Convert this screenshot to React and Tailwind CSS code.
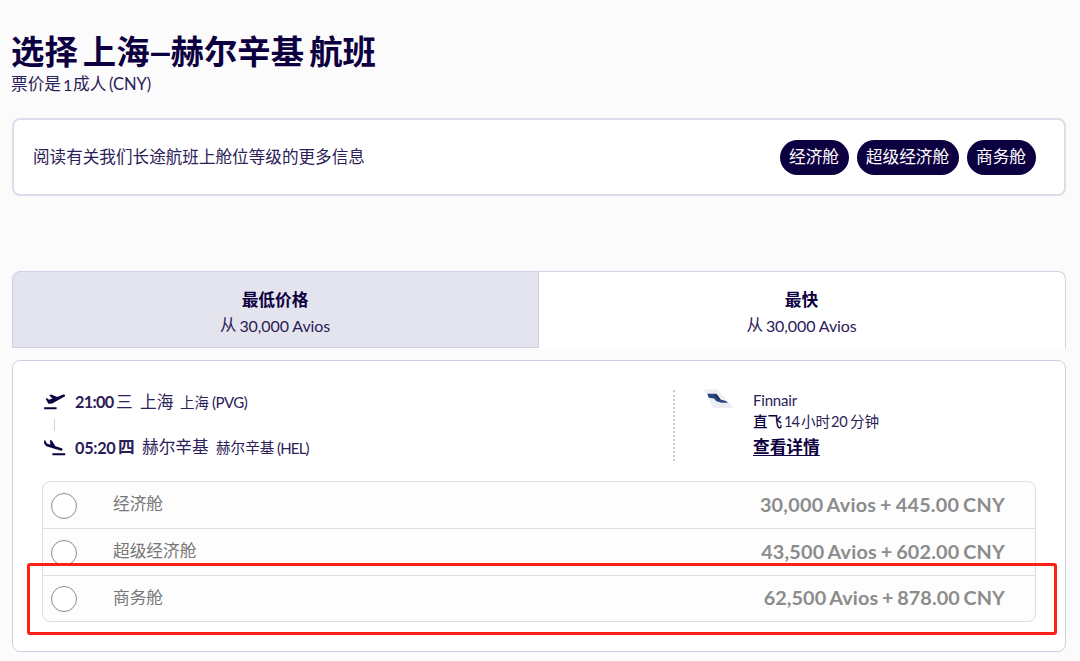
const cabins = [
  { name: '经济舱', price: '30,000 Avios + 445.00 CNY', tracking: 'tracking-[0.25px]' },
  { name: '超级经济舱', price: '43,500 Avios + 602.00 CNY', tracking: 'tracking-[0.2px]' },
  { name: '商务舱', price: '62,500 Avios + 878.00 CNY', tracking: 'tracking-[0.1px]' },
];

function Takeoff() {
  return (
    <svg viewBox="0 0 22 17" className="h-[17px] w-[22px] shrink-0" fill="#0d0040">
      <path d="M.2 13.2h12.4v2.1H.2zM1.6 4.6l1.4-.4 2 1.6 3.4-1.2L5.2 1.2l1.9-.8 6.1 2.7L18.6.7c1-.5 2.1-.4 2.4.3.4.8-.3 1.6-1.3 2.1L8.2 9.4l-3.8.3z" />
    </svg>
  );
}

function Landing() {
  return (
    <svg viewBox="0 0 22 17" className="h-[17px] w-[22px] shrink-0" fill="#0d0040">
      <path d="M8.4 13.2h12.8v2.1H8.4zM.1.3l1.4.5 1.3 2.8 3.5 1.1L6 0l1.8.6 3.6 5.7L17 8c1.1.4 1.7 1.2 1.5 1.9-.3.7-1.1.9-2.1.6L2.3 6.2.1 3.6z" />
    </svg>
  );
}

function TailLogo() {
  return (
    <svg viewBox="0 0 32 20" className="h-5 w-8 shrink-0">
      <path d="M0 .5h13.5L29.5 19H9.5z" fill="#ededf3" />
      <path d="M3.5 4.8h8.7l3.4 4.6 1.7 1.4 3.8.9 3.1 2.1h-6.5l-5.2-1.6-2.6-2.8-5.1-.7-.8-2z" fill="#244679" />
      <path d="M10 5.5h3l3.5 5-2-.3z" fill="#172b55" />
    </svg>
  );
}

function Tab({ title, selected }) {
  return (
    <div
      className={
        selected
          ? 'flex w-[527px] flex-col items-center rounded-tl-lg border border-[#cfcfe2] bg-[#e4e4ef] pt-4'
          : 'flex w-[527px] flex-col items-center rounded-tr-lg border-t border-r border-[#d3d3e4] bg-white pt-4'
      }
    >
      <div className="pr-px text-[16.7px] leading-[25px] font-bold">{title}</div>
      <div className="flex gap-[3px] pr-px text-[16px] leading-[25px] text-[#2b2057]">
        <span className="text-[16.5px]">从</span>
        <span className="tracking-[-0.1px]">30,000 Avios</span>
      </div>
    </div>
  );
}

export default function App() {
  return (
    <div className="relative h-[661px] w-[1080px] overflow-hidden bg-[#fbfbfb] pt-[29px] pl-3 font-[Lato,'Noto_Sans_CJK_SC',sans-serif] whitespace-nowrap text-[#0d0040]">
      <h1 className="-ml-px flex h-11 items-center text-[33.4px] leading-[44px] font-bold">
        <span>选择</span>
        <span className="ml-[5px]">上海</span>
        <span className="flex w-[21px] scale-x-125 justify-center text-[37px] font-bold">–</span>
        <span>赫尔辛基</span>
        <span className="ml-[5px]">航班</span>
      </h1>
      <div className="-ml-px flex h-[23px] text-[16.7px] leading-[23px] text-[#2b2057]">
        <span className="w-[52px]">票价是</span>
        <span className="w-[10px] text-[16px]">1</span>
        <span className="w-[36px]">成人</span>
        <span className="text-[16.5px] tracking-[-0.1px]">(CNY)</span>
      </div>

      <section className="mt-[22px] flex h-[78px] w-[1054px] items-center rounded-lg border-2 border-[#dcdcea] bg-white pr-7 pl-[19px]">
        <p className="text-[16.6px] text-[#2b2057]">阅读有关我们长途航班上舱位等级的更多信息</p>
        <div className="ml-auto flex gap-2 text-[16.7px] leading-[35px] text-white">
          <span className="w-[69px] rounded-full bg-[#0d0040] pr-px text-center">经济舱</span>
          <span className="w-[102px] rounded-full bg-[#0d0040] pr-px text-center">超级经济舱</span>
          <span className="w-[69px] rounded-full bg-[#0d0040] pr-px text-center">商务舱</span>
        </div>
      </section>

      <div className="mt-[75px] flex h-[77px] w-[1054px]">
        <Tab title="最低价格" selected />
        <Tab title="最快" />
      </div>

      <section className="mt-3 h-[292px] w-[1054px] rounded-lg border border-[#cfcfe2] bg-white px-[29px] pt-7">
        <div className="flex h-[92px]">
          <div className="w-[631px] pl-0.5 text-[#2b2057]">
            <div className="flex h-[27px] items-center">
              <Takeoff />
              <b className="ml-[9px] w-[41px] text-[16.3px] tracking-[-0.7px]">21:00</b>
              <span className="w-6 text-[16.7px]">三</span>
              <span className="w-10 text-[16.7px]">上海</span>
              <span className="w-8 text-[14.4px]">上海</span>
              <span className="text-[15px] tracking-[-0.5px]">(PVG)</span>
            </div>
            <div className="ml-2.5 h-[19px] pt-[3px]">
              <div className="h-3 w-px bg-[#cfcfe2]" />
            </div>
            <div className="flex h-[26px] items-center">
              <Landing />
              <b className="ml-[9px] w-[43px] text-[16.3px] tracking-[-0.3px]">05:20</b>
              <b className="w-6 text-[16.7px]">四</b>
              <span className="w-[74px] text-[16.7px]">赫尔辛基</span>
              <span className="w-[61px] text-[14.6px]">赫尔辛基</span>
              <span className="text-[15px] tracking-[-0.8px]">(HEL)</span>
            </div>
          </div>
          <div className="mt-px h-[71px] w-[31px] border-l-2 border-dotted border-[#c9c9de]" />
          <TailLogo />
          <div className="ml-[17px] text-[#2b2057]">
            <div className="text-[15px] leading-[22px] tracking-[-0.2px]">Finnair</div>
            <div className="flex text-[14.6px] leading-[21px]">
              <span className="w-[31px] font-medium text-[#0d0040]">直飞</span>
              <span className="w-[17px] tracking-[-1px]">14</span>
              <span className="w-[30px]">小时</span>
              <span className="w-[19px] tracking-[-0.2px]">20</span>
              <span>分钟</span>
            </div>
            <div className="text-[16.7px] leading-[31px] font-bold text-[#0d0040] underline underline-offset-2">查看详情</div>
          </div>
        </div>

        <div className="h-[141px] w-[994px] rounded-lg border border-[#dedede] bg-[#fdfdfd] text-[#8c8c8c]">
          {cabins.map((cabin, i) => (
            <div
              key={cabin.name}
              className={
                i === 0
                  ? 'flex h-[46px] items-center pr-[30px] pl-2'
                  : 'flex h-[46.5px] items-center border-t border-[#dedede] pr-[30px] pl-2'
              }
            >
              <div className="mt-0.5 h-[26px] w-[26px] rounded-full border border-[#8c8c8c] bg-white" />
              <span className="ml-9 text-[16.7px] text-[#777]">{cabin.name}</span>
              <span className={`ml-auto text-right text-[19.8px] font-bold [word-spacing:-1.2px] ${cabin.tracking}`}>{cabin.price}</span>
            </div>
          ))}
        </div>
      </section>

      <div className="absolute top-[563px] left-[27px] h-[72px] w-[1030px] rounded-[3px] border-[3px] border-[#ff2015]" />
    </div>
  );
}
